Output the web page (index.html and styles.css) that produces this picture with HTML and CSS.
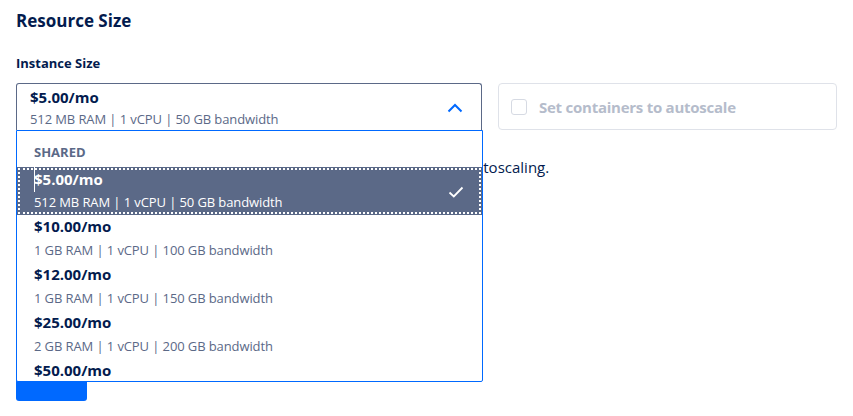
FILE: index.html
```html
<!DOCTYPE html>
<html>
<head>
<meta charset="utf-8">
<link rel="stylesheet" href="styles.css">
</head>
<body>
<div class="page">
  <h2 class="title">Resource Size</h2>
  <div class="label">Instance Size</div>
  <div class="row">
    <div class="select-wrap">
      <div class="select">
        <div class="sel-text">
          <div class="price">$5.00/mo</div>
          <div class="spec">512 MB RAM | 1 vCPU | 50 GB bandwidth</div>
        </div>
        <svg class="chev" width="16" height="10" viewBox="0 0 16 10"><path d="M1.5 8.5 L8 2 L14.5 8.5" fill="none" stroke="#0069ff" stroke-width="2"/></svg>
      </div>
      <div class="menu">
        <div class="group">SHARED</div>
        <div class="opt selected">
          <div class="opt-text">
            <div class="price caret">$5.00/mo</div>
            <div class="spec">512 MB RAM | 1 vCPU | 50 GB bandwidth</div>
          </div>
          <svg class="check" width="16" height="12" viewBox="0 0 16 12"><path d="M1.5 6.5 L5.8 10.5 L14.5 1.5" fill="none" stroke="#fff" stroke-width="1.8"/></svg>
        </div>
        <div class="opt">
          <div class="price">$10.00/mo</div>
          <div class="spec">1 GB RAM | 1 vCPU | 100 GB bandwidth</div>
        </div>
        <div class="opt">
          <div class="price">$12.00/mo</div>
          <div class="spec">1 GB RAM | 1 vCPU | 150 GB bandwidth</div>
        </div>
        <div class="opt">
          <div class="price">$25.00/mo</div>
          <div class="spec">2 GB RAM | 1 vCPU | 200 GB bandwidth</div>
        </div>
        <div class="opt">
          <div class="price">$50.00/mo</div>
          <div class="spec">2 GB RAM | 2 vCPUs | 250 GB bandwidth</div>
        </div>
      </div>
    </div>
    <label class="auto-card">
      <span class="box"></span>
      <span class="auto-text">Set containers to autoscale</span>
    </label>
  </div>
  <p class="note">Select a plan with dedicated CPU resources to enable container autoscaling.</p>
  <button class="save">Save</button>
</div>
</body>
</html>
```

FILE: styles.css
```css
* { box-sizing: border-box; }
body {
  margin: 0;
  background: #fff;
  font-family: "Open Sans", "Noto Sans", sans-serif;
  color: #031b4e;
}
.page { padding: 8px 16px 0; }
.title {
  margin: 0;
  font-size: 17px;
  line-height: 26px;
  font-weight: 700;
  color: #031b4e;
}
.label {
  margin-top: 20px;
  font-size: 13px;
  line-height: 18px;
  font-weight: 700;
}
.row {
  margin-top: 11px;
  display: flex;
  gap: 16px;
}
.select-wrap {
  position: relative;
  width: 466px;
  flex: none;
}
.select {
  height: 47px;
  border: 1px solid #5b6987;
  border-bottom: none;
  border-radius: 3px 3px 0 0;
  display: flex;
  align-items: center;
  justify-content: space-between;
  padding: 0 18px 0 13px;
}
.price {
  font-size: 15px;
  line-height: 20px;
  font-weight: 700;
  color: #031b4e;
}
.spec {
  font-size: 13px;
  line-height: 20px;
  color: #5b6987;
  letter-spacing: -0.1px;
}
.sel-text { align-self: flex-start; padding-top: 3px; }
.sel-text .spec { margin-top: 2px; }
.chev { margin-top: 2px; }
.menu {
  position: absolute;
  top: 47px;
  left: 0;
  width: 467px;
  height: 252px;
  border: 1px solid #0069ff;
  border-radius: 0 0 2px 2px;
  background: #fff;
  overflow: hidden;
  z-index: 5;
}
.group {
  height: 36px;
  padding: 12px 0 0 17px;
  font-size: 13px;
  line-height: 18px;
  font-weight: 700;
  color: #5b6987;
}
.opt {
  height: 48px;
  padding: 1px 16px 0 17px;
}
.opt .spec { margin-top: 4px; }
.opt.selected {
  background: #5b6987;
  outline: 2px dotted #fff;
  outline-offset: -3px;
  display: flex;
  align-items: center;
  justify-content: space-between;
  padding: 0 16px 0 17px;
}
.opt.selected .price,
.opt.selected .spec { color: #fff; }
.opt.selected .spec { margin-top: 3px; }
.opt-text { align-self: flex-start; padding-top: 2px; }
.caret { position: relative; }
.caret::before {
  content: "";
  position: absolute;
  left: 0;
  top: -4px;
  width: 1px;
  height: 27px;
  background: #fff;
}
.check { margin-top: 2px; margin-right: 2px; }
.auto-card {
  width: 342px;
  height: 47px;
  border: 1px solid #dfe2e9;
  border-radius: 4px;
  display: flex;
  align-items: center;
  padding-left: 12px;
  gap: 12px;
}
.box {
  width: 16px;
  height: 16px;
  border: 1px solid #d6dae3;
  border-radius: 3px;
}
.auto-text {
  font-size: 15px;
  font-weight: 700;
  color: #b5bccb;
  letter-spacing: -0.25px;
}
.note {
  margin: 27px 0 0;
  padding-left: 5px;
  font-size: 15px;
  line-height: 20px;
  color: #031b4e;
  white-space: nowrap;
}
.save {
  display: block;
  margin-top: 176px;
  width: 71px;
  height: 48px;
  padding: 0 0 16px;
  border: none;
  border-radius: 3px;
  background: #0069ff;
  color: #fff;
  font-family: inherit;
  font-size: 15px;
  font-weight: 700;
  text-align: center;
}
```
